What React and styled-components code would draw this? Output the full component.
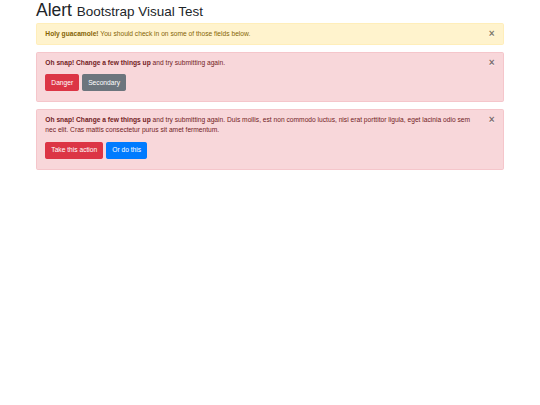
import React from 'react'
import styled, { createGlobalStyle } from 'styled-components'

const GlobalStyle = createGlobalStyle`
  html {
    font-size: 6.67px;
  }
  body {
    margin: 0;
    background: #fff;
    color: #212529;
    font-family: "Liberation Sans", Arial, sans-serif;
    font-size: 1rem;
    line-height: 1.5;
  }
`

const Container = styled.div`
  width: 468px;
  margin: 0 auto;
`

const Title = styled.h1`
  margin: 0 0 1.5px;
  font-size: 17.5px;
  font-weight: 500;
  line-height: 1.2;
  small {
    font-size: 77%;
    font-weight: 400;
  }
`

const tones = {
  warning: { bg: '#fff3cd', border: '#ffeeba', color: '#856404' },
  danger: { bg: '#f8d7da', border: '#f5c6cb', color: '#721c24' },
}

const AlertBox = styled.div`
  position: relative;
  margin-bottom: 7px;
  padding: 0.75rem 4rem 0.75rem 1.25rem;
  border: 1px solid ${p => tones[p.$tone].border};
  border-radius: 0.25rem;
  background: ${p => tones[p.$tone].bg};
  color: ${p => tones[p.$tone].color};
`

const Close = styled.button`
  position: absolute;
  top: 0;
  right: 0;
  padding: 0.75rem 1.25rem;
  border: 0;
  background: transparent;
  color: #000;
  opacity: 0.5;
  font-family: inherit;
  font-size: 1.5rem;
  font-weight: 700;
  line-height: 1;
  text-shadow: 0 1px 0 #fff;
  cursor: pointer;
`

const Text = styled.p`
  margin: 0 0 1rem;
`

const Actions = styled.p`
  display: flex;
  gap: 3px;
  margin: 0 0 5px;
`

const btnColors = {
  danger: '#dc3545',
  secondary: '#6c757d',
  primary: '#007bff',
}

const Button = styled.button`
  padding: 2.5px 0.75rem;
  border: 1px solid ${p => btnColors[p.$variant]};
  border-radius: 0.25rem;
  background: ${p => btnColors[p.$variant]};
  color: #fff;
  font-family: inherit;
  font-size: 1rem;
  line-height: 1.5;
  cursor: pointer;
`

const Alert = ({ tone, children }) => (
  <AlertBox $tone={tone} role="alert">
    <Close aria-label="Close">×</Close>
    {children}
  </AlertBox>
)

export default function App() {
  return (
    <Container>
      <GlobalStyle />
      <Title>
        Alert <small>Bootstrap Visual Test</small>
      </Title>

      <Alert tone="warning">
        <strong>Holy guacamole!</strong> You should check in on some of those
        fields below.
      </Alert>

      <Alert tone="danger">
        <Text>
          <strong>Oh snap! Change a few things up</strong> and try submitting
          again.
        </Text>
        <Actions>
          <Button $variant="danger">Danger</Button>
          <Button $variant="secondary">Secondary</Button>
        </Actions>
      </Alert>

      <Alert tone="danger">
        <Text>
          <strong>Oh snap! Change a few things up</strong> and try submitting
          again. Duis mollis, est non commodo luctus, nisi erat porttitor
          ligula, eget lacinia odio sem nec elit. Cras mattis consectetur purus
          sit amet fermentum.
        </Text>
        <Actions>
          <Button $variant="danger">Take this action</Button>
          <Button $variant="primary">Or do this</Button>
        </Actions>
      </Alert>
    </Container>
  )
}
